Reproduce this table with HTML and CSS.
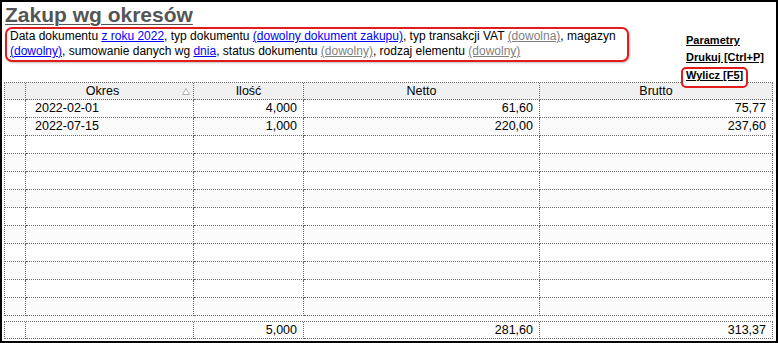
FILE: index.html
```html
<!DOCTYPE html>
<html lang="pl">
<head>
<meta charset="utf-8">
<title>Zakup wg okresów</title>
<link rel="stylesheet" href="styles.css">
</head>
<body>
<div class="frame">
  <div class="top">
    <div class="intro">
      <h1 class="title">Zakup wg okresów</h1>
      <p class="filters">Data dokumentu <a class="val" href="#">z roku 2022</a>, typ dokumentu <a class="val" href="#">(dowolny dokument zakupu)</a>, typ transakcji VAT <a class="any" href="#">(dowolna)</a>, magazyn <a class="val" href="#">(dowolny)</a>, sumowanie danych wg <a class="val" href="#">dnia</a>, status dokumentu <a class="any" href="#">(dowolny)</a>, rodzaj elementu <a class="any" href="#">(dowolny)</a></p>
    </div>
    <nav class="actions">
      <a href="#" class="act">Parametry</a>
      <a href="#" class="act">Drukuj [Ctrl+P]</a>
      <a href="#" class="act act-hl">Wylicz [F5]</a>
    </nav>
  </div>

  <div class="grid">
    <div class="row head">
      <div class="cell"></div>
      <div class="cell c sorted">Okres<svg class="sort" width="8" height="7" viewBox="0 0 8 7"><polygon points="0.5,6.5 4,0.5 7.5,6.5" fill="#fff" stroke="#b0b0b0" stroke-width="1"/></svg></div>
      <div class="cell c">Ilość</div>
      <div class="cell c">Netto</div>
      <div class="cell c">Brutto</div>
    </div>
    <div class="row"><div class="cell"></div><div class="cell l">2022-02-01</div><div class="cell r">4,000</div><div class="cell r">61,60</div><div class="cell r">75,77</div></div>
    <div class="row"><div class="cell"></div><div class="cell l">2022-07-15</div><div class="cell r">1,000</div><div class="cell r">220,00</div><div class="cell r">237,60</div></div>
    <div class="row"><div class="cell"></div><div class="cell"></div><div class="cell"></div><div class="cell"></div><div class="cell"></div></div>
    <div class="row"><div class="cell"></div><div class="cell"></div><div class="cell"></div><div class="cell"></div><div class="cell"></div></div>
    <div class="row"><div class="cell"></div><div class="cell"></div><div class="cell"></div><div class="cell"></div><div class="cell"></div></div>
    <div class="row"><div class="cell"></div><div class="cell"></div><div class="cell"></div><div class="cell"></div><div class="cell"></div></div>
    <div class="row"><div class="cell"></div><div class="cell"></div><div class="cell"></div><div class="cell"></div><div class="cell"></div></div>
    <div class="row"><div class="cell"></div><div class="cell"></div><div class="cell"></div><div class="cell"></div><div class="cell"></div></div>
    <div class="row"><div class="cell"></div><div class="cell"></div><div class="cell"></div><div class="cell"></div><div class="cell"></div></div>
    <div class="row"><div class="cell"></div><div class="cell"></div><div class="cell"></div><div class="cell"></div><div class="cell"></div></div>
    <div class="row"><div class="cell"></div><div class="cell"></div><div class="cell"></div><div class="cell"></div><div class="cell"></div></div>
    <div class="row"><div class="cell"></div><div class="cell"></div><div class="cell"></div><div class="cell"></div><div class="cell"></div></div>
  </div>

  <div class="grid totals">
    <div class="row foot"><div class="cell"></div><div class="cell"></div><div class="cell r">5,000</div><div class="cell r">281,60</div><div class="cell r">313,37</div></div>
  </div>
</div>
</body>
</html>
```
FILE: styles.css
```css
* { box-sizing: border-box; }
html, body { margin: 0; padding: 0; background: #fff; }
body { font-family: "Liberation Sans", Arial, sans-serif; color: #000; }

.frame {
  width: 778px;
  height: 343px;
  border: 2px solid #000;
  overflow: hidden;
}

.top {
  display: flex;
  height: 80px;
}

.intro {
  margin-left: 3px;
  width: 624px;
  flex: none;
}

.title {
  margin: 1px 0 0;
  font-size: 21px;
  line-height: 24px;
  font-weight: bold;
  color: #555;
  text-decoration: underline;
  text-decoration-thickness: 1px;
  text-underline-offset: 2px;
}

.filters {
  margin: 0;
  width: 624px;
  height: 35px;
  border: 2px solid #e21b1b;
  border-radius: 7px;
  box-shadow: 1px 1px 2px rgba(0, 0, 0, 0.25);
  padding: 0 0 1px 3px;
  font-size: 12px;
  line-height: 15px;
  background: #fff;
}

.filters a { text-decoration: underline; }
.filters .val { color: #0000ff; }
.filters .any { color: #808080; }

.actions {
  display: flex;
  flex-direction: column;
  align-items: flex-start;
  margin-left: 52px;
  margin-top: 30px;
}

.act {
  display: block;
  font-size: 11px;
  font-weight: bold;
  line-height: 17px;
  color: #000;
  text-decoration: underline;
  padding-left: 5px;
}

.act-hl {
  margin-top: 1px;
  border: 2px solid #e21b1b;
  border-radius: 5px;
  padding: 0 3px 4px 3px;
  line-height: 13px;
  background: #fff;
  position: relative;
}

.grid {
  margin-left: 2px;
  width: 769px;
  border-left: 1px dotted #6a6a6a;
  border-top: 1px dotted #6a6a6a;
  font-size: 12.5px;
}

.row {
  display: grid;
  grid-template-columns: 21px 168px 110px 236px 233px;
  height: 18px;
}

.row:nth-child(odd) { background: #fbfbfb; }
.row.head { height: 17px; background: #f0f0f0; }

.cell {
  border-right: 1px dotted #6a6a6a;
  border-bottom: 1px dotted #6a6a6a;
  line-height: 17px;
  white-space: nowrap;
  overflow: hidden;
}

.head .cell { line-height: 16px; }

.cell.l { padding-left: 9px; }
.cell.r { text-align: right; padding-right: 6px; }
.cell.c { text-align: center; }
.cell.sorted { padding-right: 14px; position: relative; }

.sort {
  position: absolute;
  right: 3px;
  top: 5px;
}

.totals { margin-top: 5px; }
.row.foot { height: 17px; background: #fff; }
.foot .cell { line-height: 16px; }
```
